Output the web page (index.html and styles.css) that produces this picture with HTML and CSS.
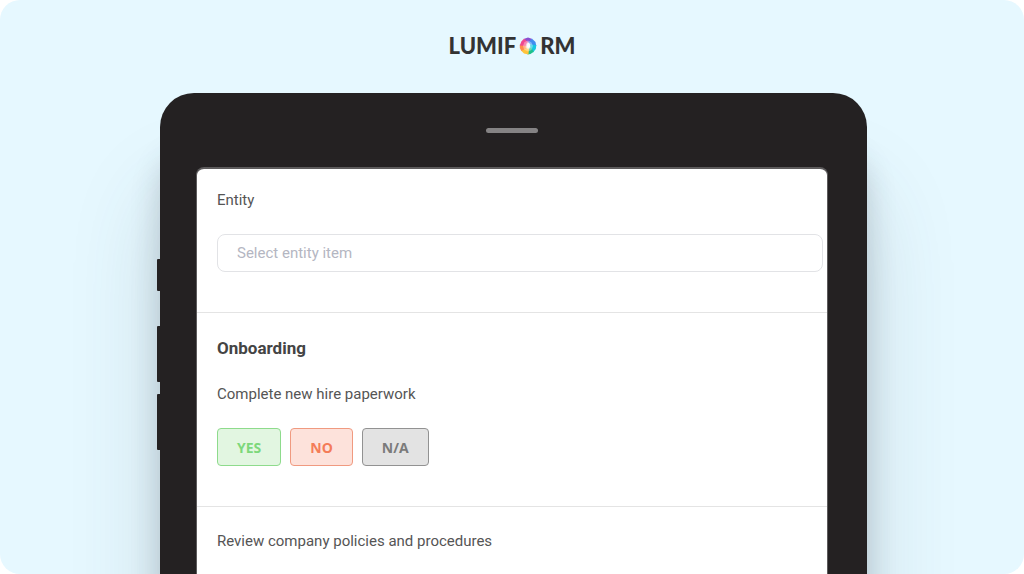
FILE: index.html
```
<!DOCTYPE html>
<html lang="en">

  <head>
    <meta charset="UTF-8">
    <meta name="viewport" content="width=device-width, initial-scale=1">
    <title>Lumiform</title>
    <link rel="stylesheet" href="styles.css">
  </head>

  <body>
    <div id="stage">
      <header class="logo">
        <span>LUMIF</span>
        <svg class="logo-mark" viewBox="0 0 18 18" aria-hidden="true">
          <path fill="#8a4fd0" d="M4.500 2 L9 .5 L13.500 2 L9.500 6 Z" />
          <path fill="#3f8cf0" d="M13 1.700 L16.500 5 L17.300 9 L11 7.500 L9.500 5 Z" />
          <path fill="#16c7e0" d="M17.300 8 L16.800 12 L14 15.500 L11 11 L11 7.500 Z" />
          <path fill="#1fc08a" d="M14.800 14.700 L11.500 17 L8.500 17.500 L9.500 11 L11.500 10 Z" />
          <path fill="#ffc43a" d="M9.500 17.500 L5 16.500 L2 13.500 L7.500 10 L10 11.500 Z" />
          <path fill="#ff8a4c" d="M2.300 14 L.8 11 L.8 7.500 L7.500 8 L8 11 Z" />
          <path fill="#f0478f" d="M.8 8.500 L2.300 4.500 L5 1.700 L9 5 L7.500 9 Z" />
          <path fill="#fff" opacity=".35" d="M9 3.500 L12.500 5.500 L14 9 L12.500 13 L9 14.500 L5 12.500 L4 9 L5.500 5 Z" />
          <path fill="#fff" opacity=".55" d="M9 5 L11 7 L11.500 11 L9 12.500 L6.500 10.500 L7 7 Z" />
        </svg>
        <span>RM</span>
      </header>

      <div id="tablet">
        <div class="side-buttons">
          <div class="side-button small"></div>
          <div class="side-button"></div>
          <div class="side-button"></div>
        </div>
        <div class="speaker"></div>

        <form id="screen">
          <section class="entity">
            <label for="entity">Entity</label>
            <input type="text" id="entity" placeholder="Select entity item">
          </section>

          <section class="onboarding">
            <h2>Onboarding</h2>
            <p>Complete new hire paperwork</p>
            <div class="answers">
              <button type="button" class="answer yes">YES</button>
              <button type="button" class="answer no">NO</button>
              <button type="button" class="answer na">N/A</button>
            </div>
          </section>

          <section class="policies">
            <p>Review company policies and procedures</p>
          </section>
        </form>
      </div>
    </div>
  </body>

</html>
```
FILE: styles.css
```
* {
  box-sizing: border-box;
}

body {
  margin: 0;
  background: #fff;
  color: #555;
  font-family: Roboto, "Liberation Sans", sans-serif;
  font-size: 15px;
  line-height: 20px;
}

h2,
p {
  margin: 0;
}

#stage {
  display: flex;
  flex-direction: column;
  min-height: 100vh;
  overflow: hidden;
  background: #e6f8ff;
  border-radius: 20px;
}

.logo {
  display: flex;
  align-items: center;
  justify-content: center;
  gap: 3px;
  padding: 34px 0 35px;
  color: #333;
  font-family: Lato, sans-serif;
  font-size: 22px;
  font-weight: 900;
  line-height: 24px;
}

.logo-mark {
  width: 18px;
  height: 18px;
}

#tablet {
  position: relative;
  display: flex;
  flex: 1;
  flex-direction: column;
  margin: 0 157px 0 160px;
  padding: 35px 39px 0 36px;
  background: #242122;
  border-radius: 34px 34px 0 0;
  box-shadow: 0 100px 90px rgba(60, 80, 90, 0.18), 0 60px 30px rgba(40, 50, 60, 0.2);
}

.side-buttons {
  position: absolute;
  top: 166px;
  left: -3px;
}

.side-button {
  width: 4px;
  height: 56px;
  margin-bottom: 12px;
  background: #242122;
  border-radius: 1px 0 0 1px;
}

.side-button.small {
  height: 32px;
  margin-bottom: 35px;
}

.speaker {
  width: 52px;
  height: 5px;
  margin: 0 auto 34px;
  background: #858384;
  border-radius: 3px;
}

#screen {
  flex: 1;
  background: #fff;
  border: 1px solid #5d5b5c;
  border-top-width: 2px;
  border-bottom: 0;
  border-radius: 8px 8px 0 0;
}

#screen section {
  padding-left: 20px;
  padding-right: 4px;
  border-bottom: 1px solid #e4e4e4;
}

#screen .entity {
  padding-top: 21px;
  padding-bottom: 40px;
}

.entity label {
  display: block;
  margin-bottom: 24px;
}

.entity input {
  display: block;
  width: 100%;
  height: 38px;
  padding: 0 19px;
  background: #fff;
  border: 1px solid #e2e3e6;
  border-radius: 8px;
  color: #555;
  font: inherit;
}

.entity input::placeholder {
  color: #b4b6c2;
  opacity: 1;
}

#screen .onboarding {
  padding-top: 25px;
  padding-bottom: 40px;
}

.onboarding h2 {
  margin-bottom: 26px;
  color: #444;
  font-size: 17px;
  font-weight: 700;
  line-height: 20px;
}

.answers {
  display: flex;
  gap: 9px;
  margin-top: 24px;
}

.answer {
  height: 38px;
  padding: 0 19px;
  border: 1px solid;
  border-radius: 4px;
  font-family: "Open Sans", sans-serif;
  font-size: 14px;
  font-weight: 700;
}

.answer.yes {
  background: #e2f6e1;
  border-color: #8edb8c;
  color: #7dd87b;
}

.answer.no {
  background: #fde2db;
  border-color: #f09a80;
  color: #f47c58;
}

.answer.na {
  background: #e3e3e3;
  border-color: #929292;
  color: #7b7b7b;
}

#screen .policies {
  padding-top: 24px;
  padding-bottom: 20px;
  border-bottom: 0;
}
```
